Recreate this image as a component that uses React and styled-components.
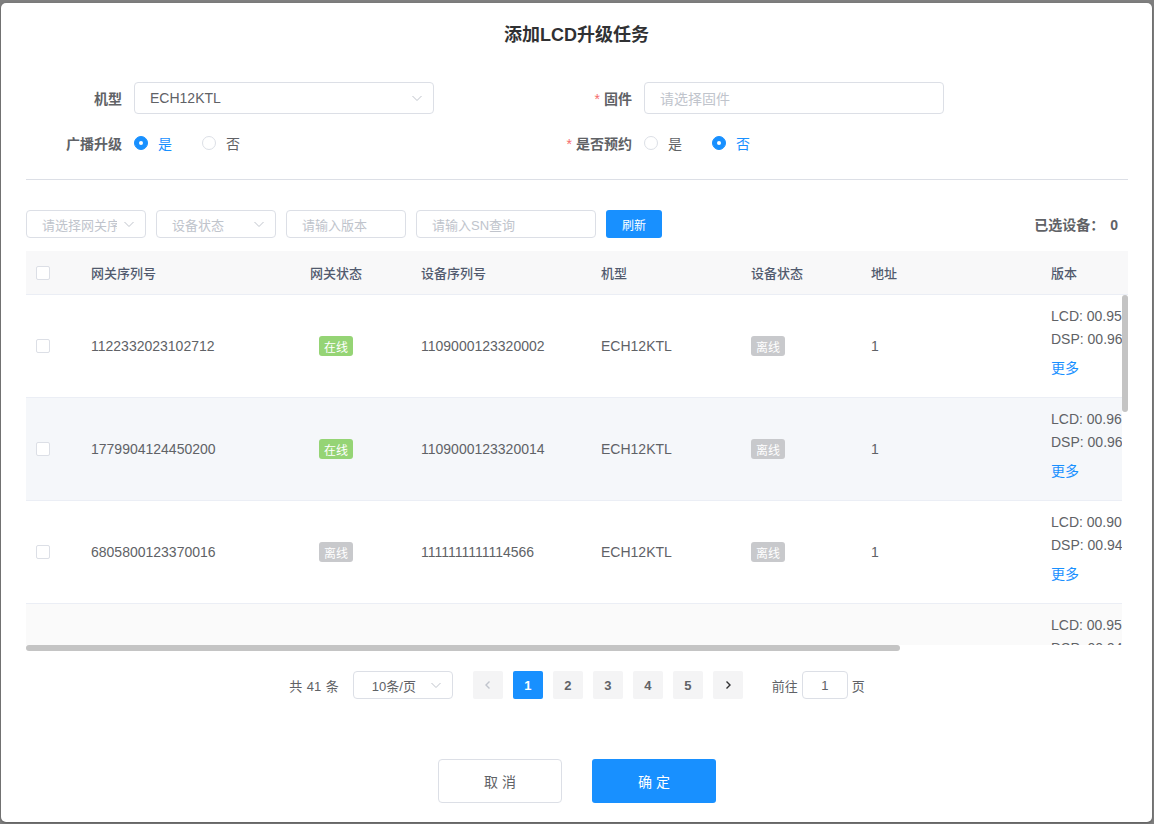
import React from "react";
import styled, { createGlobalStyle, css } from "styled-components";

const Global = createGlobalStyle`
  html, body { margin: 0; padding: 0; }
  body {
    font-family: "Liberation Sans", "Noto Sans CJK SC", sans-serif;
    font-size: 14px;
    color: #606266;
    background: #7f7f7f;
  }
  * { box-sizing: border-box; }
`;

const Page = styled.div`
  width: 1154px;
  height: 824px;
  padding: 3px 0 0 1px;
  background: #7f7f7f;
  overflow: hidden;
`;

const Dialog = styled.div`
  width: 1151px;
  height: 819px;
  background: #fff;
  border-radius: 5px;
  display: flex;
  flex-direction: column;
  box-shadow: 0 1px 3px rgba(0, 0, 0, 0.3);
`;

const Header = styled.div`
  padding-top: 20px;
  text-align: center;
`;

const Title = styled.div`
  font-size: 18px;
  line-height: 24px;
  font-weight: bold;
  color: #303133;
`;

const Body = styled.div`
  padding: 0 24px 0 25px;
`;

const FormGrid = styled.div`
  margin-top: 35px;
  display: grid;
  grid-template-columns: 510px 1fr;
  row-gap: 13px;
`;

const FormItem = styled.div`
  display: flex;
  align-items: center;
  height: 32px;
`;

const Label = styled.label`
  width: 108px;
  padding-right: 12px;
  text-align: right;
  font-weight: bold;
  color: #606266;
  font-size: 14px;
`;

const Star = styled.span`
  color: #f56c6c;
  margin-right: 4px;
  font-weight: normal;
`;

const InputBox = styled.div`
  width: ${(p) => p.$w || 300}px;
  height: ${(p) => p.$h || 32}px;
  border: 1px solid #dcdfe6;
  border-radius: 4px;
  display: flex;
  align-items: center;
  padding: 0 ${(p) => (p.$center ? 0 : 15)}px;
  padding-left: ${(p) => (p.$center ? 0 : p.$pl || 15)}px;
  justify-content: ${(p) => (p.$center ? "center" : "flex-start")};
  font-size: ${(p) => p.$fs || 14}px;
  color: ${(p) => (p.$placeholder ? "#c0c4cc" : "#606266")};
  background: #fff;
  overflow: hidden;
  white-space: nowrap;
`;

const InputText = styled.span`
  flex: 1;
  overflow: hidden;
  white-space: nowrap;
`;

const Arrow = styled.svg`
  flex: none;
  width: 12px;
  height: 12px;
  margin-left: 6px;
  margin-right: -5px;
`;

const ChevronDown = () => (
  <Arrow viewBox="0 0 12 12">
    <path d="M1.5 4 L6 8.5 L10.5 4" fill="none" stroke="#c0c4cc" strokeWidth="1" />
  </Arrow>
);

const RadioGroup = styled.div`
  display: flex;
  align-items: center;
`;

const RadioItem = styled.div`
  display: flex;
  align-items: center;
  margin-right: 30px;
  font-size: 14px;
  color: ${(p) => (p.$checked ? "#1890ff" : "#606266")};
`;

const RadioCircle = styled.span`
  width: 14px;
  height: 14px;
  border-radius: 50%;
  margin-right: 10px;
  display: inline-flex;
  align-items: center;
  justify-content: center;
  ${(p) =>
    p.$checked
      ? css`
          background: #1890ff;
          border: 1px solid #1890ff;
          &::after {
            content: "";
            width: 4px;
            height: 4px;
            border-radius: 50%;
            background: #fff;
          }
        `
      : css`
          background: #fff;
          border: 1px solid #dcdfe6;
        `}
`;

const Radio = ({ checked, children }) => (
  <RadioItem $checked={checked}>
    <RadioCircle $checked={checked} />
    {children}
  </RadioItem>
);

const Divider = styled.div`
  margin-top: 20px;
  height: 1px;
  background: #dcdfe6;
`;

const Toolbar = styled.div`
  margin-top: 30px;
  height: 28px;
  display: flex;
  align-items: center;
  gap: 10px;
`;

const PrimaryButton = styled.button`
  border: none;
  background: #1890ff;
  color: #fff;
  border-radius: 3px;
  font-family: inherit;
  font-size: ${(p) => p.$fs || 12}px;
  width: ${(p) => p.$w}px;
  height: ${(p) => p.$h}px;
  letter-spacing: ${(p) => p.$ls || 0}px;
  padding: 0 0 0 ${(p) => p.$ls || 0}px;
  cursor: pointer;
`;

const Selected = styled.div`
  margin-left: auto;
  padding-right: 10px;
  font-weight: bold;
  color: #606266;
  font-size: 14px;
  word-spacing: 2px;
`;

const Table = styled.div`
  margin-top: 13px;
  width: 1102px;
`;

const cols = "50px 190px 140px 180px 150px 120px 180px 364px";

const HeadWrap = styled.div`
  overflow: hidden;
  background: #f8f8f9;
  border-bottom: 1px solid #ebeef5;
`;

const HeadRow = styled.div`
  display: grid;
  grid-template-columns: ${cols};
  height: 43px;
  width: 1374px;
`;

const HeadCell = styled.div`
  display: flex;
  align-items: center;
  justify-content: ${(p) => (p.$center ? "center" : "flex-start")};
  padding: 0 ${(p) => (p.$center ? 0 : p.$pad ?? 15)}px;
  color: #515a6e;
  font-size: 13px;
  font-weight: 500;
`;

const BodyArea = styled.div`
  display: flex;
  height: 350px;
`;

const Viewport = styled.div`
  width: 1096px;
  height: 350px;
  overflow: hidden;
`;

const VTrack = styled.div`
  width: 6px;
  height: 350px;
`;

const VThumb = styled.div`
  width: 6px;
  height: 117px;
  border-radius: 3px;
  background: #c4c4c4;
`;

const HTrack = styled.div`
  height: 6px;
  width: 1096px;
`;

const HThumb = styled.div`
  height: 6px;
  width: 874px;
  border-radius: 3px;
  background: #c4c4c4;
`;

const Row = styled.div`
  display: grid;
  grid-template-columns: ${cols};
  width: 1374px;
  height: 103px;
  border-bottom: 1px solid #ebeef5;
  background: ${(p) => p.$bg || "#fff"};
`;

const Cell = styled.div`
  display: flex;
  align-items: center;
  justify-content: ${(p) => (p.$center ? "center" : "flex-start")};
  padding: 0 ${(p) => (p.$center ? 0 : p.$pad ?? 15)}px;
  color: #606266;
  font-size: 14px;
  overflow: hidden;
  white-space: nowrap;
`;

const VersionCell = styled.div`
  padding: 10px 15px 0;
  color: #606266;
  font-size: 14px;
  line-height: 23px;
  white-space: nowrap;
`;

const MoreLink = styled.div`
  margin-top: 6px;
  color: #1890ff;
  font-size: 14px;
`;

const Checkbox = styled.span`
  width: 14px;
  height: 14px;
  border: 1px solid #dcdfe6;
  border-radius: 2px;
  background: #fff;
  display: inline-block;
`;

const Tag = styled.span`
  display: inline-flex;
  align-items: center;
  justify-content: center;
  height: 20px;
  padding: 0 5px;
  border-radius: 3px;
  font-size: 12px;
  color: #fff;
  background: ${(p) => (p.$online ? "#95d475" : "#c8c9cc")};
`;

const Pager = styled.div`
  margin-top: 20px;
  height: 28px;
  display: flex;
  align-items: center;
  justify-content: center;
  font-size: 13px;
  color: #606266;
`;

const Total = styled.span`
  margin-right: 14px;
  word-spacing: 1px;
`;

const PageBtn = styled.div`
  width: 30px;
  height: 28px;
  margin-left: 10px;
  border-radius: 2px;
  display: flex;
  align-items: center;
  justify-content: center;
  font-size: 13px;
  font-weight: bold;
  background: ${(p) => (p.$active ? "#1890ff" : "#f4f4f5")};
  color: ${(p) => (p.$active ? "#fff" : p.$disabled ? "#c0c4cc" : "#606266")};
`;

const PagerGap = styled.span`
  width: 10px;
`;

const Jumper = styled.div`
  display: flex;
  align-items: center;
  margin-left: 29px;
  gap: 4px;
`;

const Footer = styled.div`
  margin-top: 60px;
  display: flex;
  justify-content: center;
  gap: 30px;
  padding-left: 1px;
`;

const DefaultButton = styled.button`
  width: 124px;
  height: 44px;
  background: #fff;
  border: 1px solid #dcdfe6;
  border-radius: 4px;
  color: #606266;
  font-family: inherit;
  font-size: 14px;
  letter-spacing: 4px;
  padding: 0 0 0 4px;
`;

const Chev = ({ dir, color }) => (
  <svg width="10" height="10" viewBox="0 0 10 10">
    <path
      d={dir === "left" ? "M6.5 1.5 L3 5 L6.5 8.5" : "M3.5 1.5 L7 5 L3.5 8.5"}
      fill="none"
      stroke={color}
      strokeWidth="1.4"
    />
  </svg>
);

const rows = [
  ["1122332023102712", true, "1109000123320002", "ECH12KTL", false, "1", "00.95", "00.96"],
  ["1779904124450200", true, "1109000123320014", "ECH12KTL", false, "1", "00.96", "00.96"],
  ["6805800123370016", false, "1111111111114566", "ECH12KTL", false, "1", "00.90", "00.94"],
  ["6805800123370022", false, "1109000123320021", "ECH12KTL", false, "1", "00.95", "00.94"],
  ["1122332023102715", true, "1109000123320030", "ECH12KTL", false, "1", "00.95", "00.96"],
  ["1779904124450233", true, "1109000123320041", "ECH12KTL", false, "1", "00.96", "00.96"],
  ["6805800123370051", false, "1109000123320052", "ECH12KTL", false, "1", "00.90", "00.94"],
  ["1122332023102790", true, "1109000123320063", "ECH12KTL", false, "1", "00.95", "00.96"],
  ["1779904124450277", false, "1109000123320074", "ECH12KTL", false, "1", "00.96", "00.96"],
  ["6805800123370088", false, "1109000123320085", "ECH12KTL", false, "1", "00.90", "00.94"],
];

export default function App() {
  return (
    <Page>
      <Global />
      <Dialog>
        <Header>
          <Title>添加LCD升级任务</Title>
        </Header>
        <Body>
          <FormGrid>
            <FormItem>
              <Label>机型</Label>
              <InputBox>
                <InputText>ECH12KTL</InputText>
                <ChevronDown />
              </InputBox>
            </FormItem>
            <FormItem>
              <Label>
                <Star>*</Star>固件
              </Label>
              <InputBox $placeholder>
                <InputText>请选择固件</InputText>
              </InputBox>
            </FormItem>
            <FormItem>
              <Label>广播升级</Label>
              <RadioGroup>
                <Radio checked>是</Radio>
                <Radio>否</Radio>
              </RadioGroup>
            </FormItem>
            <FormItem>
              <Label>
                <Star>*</Star>是否预约
              </Label>
              <RadioGroup>
                <Radio>是</Radio>
                <Radio checked>否</Radio>
              </RadioGroup>
            </FormItem>
          </FormGrid>
          <Divider />
          <Toolbar>
            <InputBox $w={120} $h={28} $fs={13} $placeholder>
              <InputText>请选择网关序列号</InputText>
              <ChevronDown />
            </InputBox>
            <InputBox $w={120} $h={28} $fs={13} $placeholder>
              <InputText>设备状态</InputText>
              <ChevronDown />
            </InputBox>
            <InputBox $w={120} $h={28} $fs={13} $placeholder>
              <InputText>请输入版本</InputText>
            </InputBox>
            <InputBox $w={180} $h={28} $fs={13} $placeholder>
              <InputText>请输入SN查询</InputText>
            </InputBox>
            <PrimaryButton $w={56} $h={28}>刷新</PrimaryButton>
            <Selected>已选设备： 0</Selected>
          </Toolbar>
          <Table>
            <HeadWrap>
              <HeadRow>
                <HeadCell $pad={10}>
                  <Checkbox />
                </HeadCell>
                <HeadCell>网关序列号</HeadCell>
                <HeadCell $center>网关状态</HeadCell>
                <HeadCell>设备序列号</HeadCell>
                <HeadCell>机型</HeadCell>
                <HeadCell>设备状态</HeadCell>
                <HeadCell>地址</HeadCell>
                <HeadCell>版本</HeadCell>
              </HeadRow>
            </HeadWrap>
            <BodyArea>
              <Viewport>
                {rows.map((r, i) => (
                  <Row key={i} $bg={i === 1 ? "#f5f7fa" : i % 2 === 1 ? "#fafafa" : "#fff"}>
                    <Cell $pad={10}>
                      <Checkbox />
                    </Cell>
                    <Cell>{r[0]}</Cell>
                    <Cell $center>
                      <Tag $online={r[1]}>{r[1] ? "在线" : "离线"}</Tag>
                    </Cell>
                    <Cell>{r[2]}</Cell>
                    <Cell>{r[3]}</Cell>
                    <Cell>
                      <Tag $online={r[4]}>{r[4] ? "在线" : "离线"}</Tag>
                    </Cell>
                    <Cell>{r[5]}</Cell>
                    <VersionCell>
                      <div>LCD: {r[6]}</div>
                      <div>DSP: {r[7]}</div>
                      <MoreLink>更多</MoreLink>
                    </VersionCell>
                  </Row>
                ))}
              </Viewport>
              <VTrack>
                <VThumb />
              </VTrack>
            </BodyArea>
            <HTrack>
              <HThumb />
            </HTrack>
          </Table>
          <Pager>
            <Total>共 41 条</Total>
            <InputBox $w={100} $h={28} $fs={13} $pl={18}>
              <InputText>10条/页</InputText>
              <ChevronDown />
            </InputBox>
            <PagerGap />
            <PageBtn $disabled>
              <Chev dir="left" color="#c0c4cc" />
            </PageBtn>
            <PageBtn $active>1</PageBtn>
            <PageBtn>2</PageBtn>
            <PageBtn>3</PageBtn>
            <PageBtn>4</PageBtn>
            <PageBtn>5</PageBtn>
            <PageBtn>
              <Chev dir="right" color="#303133" />
            </PageBtn>
            <Jumper>
              <span>前往</span>
              <InputBox $w={46} $h={28} $fs={13} $center>
                1
              </InputBox>
              <span>页</span>
            </Jumper>
          </Pager>
        </Body>
        <Footer>
          <DefaultButton>取消</DefaultButton>
          <PrimaryButton $w={124} $h={44} $fs={14} $ls={4}>
            确定
          </PrimaryButton>
        </Footer>
      </Dialog>
    </Page>
  );
}
